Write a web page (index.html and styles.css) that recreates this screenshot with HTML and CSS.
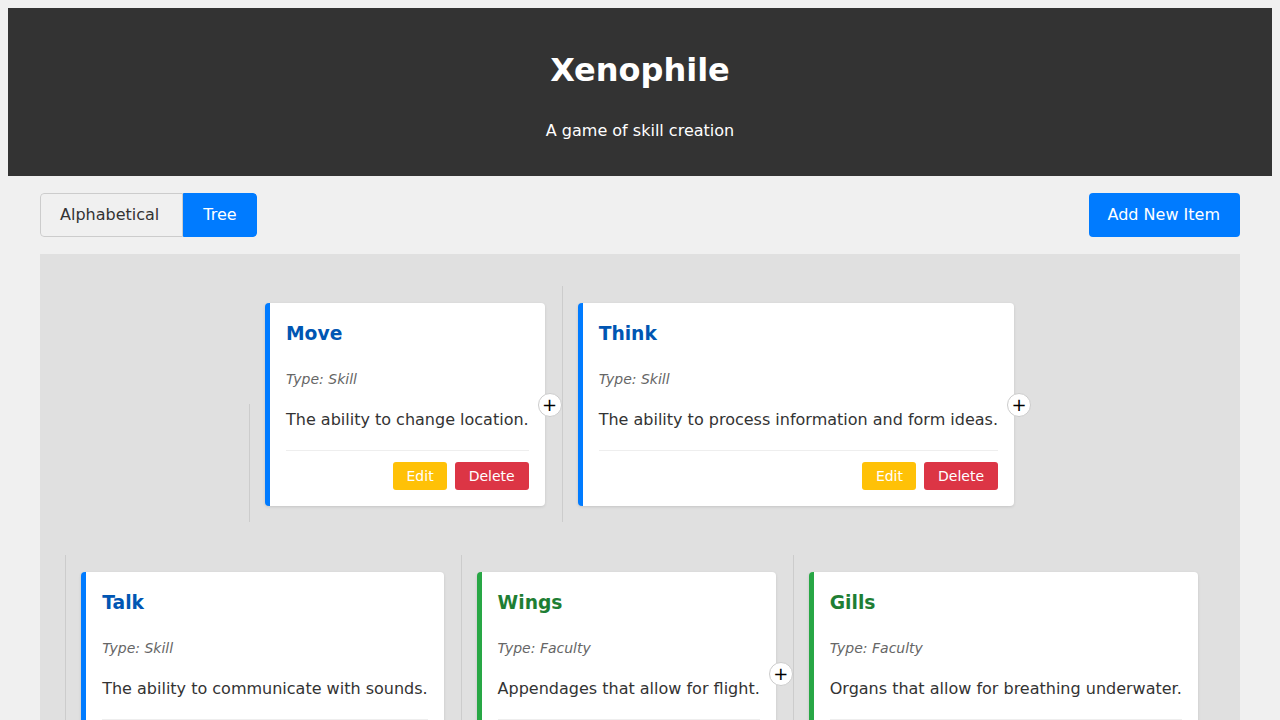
FILE: index.html
```html
<!DOCTYPE html>
<html lang="en">
<head>
<meta charset="utf-8">
<title>Xenophile</title>
<link rel="stylesheet" href="styles.css">
</head>
<body>
<header class="site-header">
  <h1 class="site-title">Xenophile</h1>
  <p class="site-subtitle">A game of skill creation</p>
</header>
<main class="container">
  <div class="controls">
    <div class="view-toggle">
      <button class="toggle-btn">Alphabetical</button>
      <button class="toggle-btn active">Tree</button>
    </div>
    <button class="add-btn">Add New Item</button>
  </div>
  <section class="tree">
    <div class="tree-row">
      <div class="tree-node half-line">
        <div class="card skill">
          <h3 class="card-title">Move</h3>
          <p class="card-type">Type: Skill</p>
          <p class="card-desc">The ability to change location.</p>
          <div class="card-actions">
            <button class="btn btn-edit">Edit</button>
            <button class="btn btn-delete">Delete</button>
          </div>
        </div>
        <button class="add-child">+</button>
      </div>
      <div class="tree-node">
        <div class="card skill">
          <h3 class="card-title">Think</h3>
          <p class="card-type">Type: Skill</p>
          <p class="card-desc">The ability to process information and form ideas.</p>
          <div class="card-actions">
            <button class="btn btn-edit">Edit</button>
            <button class="btn btn-delete">Delete</button>
          </div>
        </div>
        <button class="add-child">+</button>
      </div>
    </div>
    <div class="tree-row">
      <div class="tree-node">
        <div class="card skill">
          <h3 class="card-title">Talk</h3>
          <p class="card-type">Type: Skill</p>
          <p class="card-desc">The ability to communicate with sounds.</p>
          <div class="card-actions">
            <button class="btn btn-edit">Edit</button>
            <button class="btn btn-delete">Delete</button>
          </div>
        </div>
      </div>
      <div class="tree-node">
        <div class="card faculty">
          <h3 class="card-title">Wings</h3>
          <p class="card-type">Type: Faculty</p>
          <p class="card-desc">Appendages that allow for flight.</p>
          <div class="card-actions">
            <button class="btn btn-edit">Edit</button>
            <button class="btn btn-delete">Delete</button>
          </div>
        </div>
        <button class="add-child">+</button>
      </div>
      <div class="tree-node">
        <div class="card faculty">
          <h3 class="card-title">Gills</h3>
          <p class="card-type">Type: Faculty</p>
          <p class="card-desc">Organs that allow for breathing underwater.</p>
          <div class="card-actions">
            <button class="btn btn-edit">Edit</button>
            <button class="btn btn-delete">Delete</button>
          </div>
        </div>
      </div>
    </div>
  </section>
</main>
</body>
</html>
```
FILE: styles.css
```css
html, body {
  margin: 0;
  padding: 0;
}
body {
  margin: 8px;
  background: #f0f0f0;
  font-family: "DejaVu Sans", "Liberation Sans", sans-serif;
  color: #333;
}
.site-header {
  background: #333;
  color: #fff;
  text-align: center;
  padding: 43px 20px 33px;
}
.site-title {
  margin: 0 0 30px;
  font-size: 32px;
  line-height: 38px;
  font-weight: bold;
}
.site-subtitle {
  margin: 0;
  font-size: 16px;
  line-height: 24px;
}
.container {
  max-width: 1200px;
  margin: 0 auto;
}
.controls {
  display: flex;
  justify-content: space-between;
  align-items: center;
  margin-top: 17px;
}
.view-toggle {
  display: flex;
  border-radius: 4px;
  overflow: hidden;
}
.toggle-btn {
  font-family: inherit;
  font-size: 16px;
  line-height: 24px;
  padding: 9px 23px 9px 19px;
  border: 1px solid #ccc;
  background: #f0f0f0;
  color: #333;
  margin: 0;
}
.toggle-btn:first-child {
  border-radius: 4px 0 0 4px;
}
.toggle-btn:last-child {
  border-radius: 0 4px 4px 0;
}
.toggle-btn.active {
  background: #007bff;
  border-color: #007bff;
  color: #fff;
  padding: 9px 19px;
}
.add-btn {
  font-family: inherit;
  font-size: 16px;
  line-height: 24px;
  padding: 10px 20px 10px 19px;
  border: 0;
  border-radius: 4px;
  background: #007bff;
  color: #fff;
}
.tree {
  margin-top: 17px;
  background: #e0e0e0;
  padding: 32px 24px;
  display: flex;
  flex-direction: column;
  gap: 33px;
}
.tree-row {
  display: flex;
  justify-content: center;
  align-items: flex-start;
}
.tree-node {
  position: relative;
  border-left: 1px solid #ccc;
  padding: 17px 17px 16px 15px;
}
.tree-node.half-line {
  border-left: 1px solid transparent;
  background: linear-gradient(#ccc, #ccc) left bottom / 1px 50% no-repeat;
  background-origin: border-box;
}
.card {
  background: #fff;
  border-radius: 4px;
  border-left: 5px solid #007bff;
  box-shadow: 0 1px 3px rgba(0, 0, 0, 0.12);
  padding: 16px;
}
.card.faculty {
  border-left-color: #28a745;
}
.card-title {
  margin: 1px 0 0;
  font-size: 18.72px;
  line-height: 28px;
  font-weight: bold;
  color: #0056b3;
}
.card.faculty .card-title {
  color: #1e7e34;
}
.card-type {
  margin: 21px 0 0;
  font-size: 14px;
  line-height: 21px;
  font-style: italic;
  color: #666;
}
.card-desc {
  margin: 18px 0 0;
  font-size: 16px;
  line-height: 24px;
  color: #333;
}
.card-actions {
  margin-top: 18px;
  border-top: 1px solid #eee;
  padding-top: 11px;
  display: flex;
  justify-content: flex-end;
  gap: 8px;
}
.btn {
  font-family: inherit;
  font-size: 14px;
  line-height: 20px;
  padding: 4px 14px;
  border: 0;
  border-radius: 3px;
  color: #fff;
}
.btn-edit {
  background: #ffc107;
  padding: 4px 13px 4px 14px;
}
.btn-delete {
  background: #dc3545;
}
.add-child {
  position: absolute;
  right: 0;
  top: calc(50% + 1px);
  transform: translateY(-50%);
  width: 24px;
  height: 24px;
  border-radius: 50%;
  border: 1px solid #ccc;
  background: #fff;
  color: #000;
  font-family: inherit;
  font-size: 18px;
  line-height: 20px;
  padding: 0;
  display: flex;
  align-items: center;
  justify-content: center;
}
```
